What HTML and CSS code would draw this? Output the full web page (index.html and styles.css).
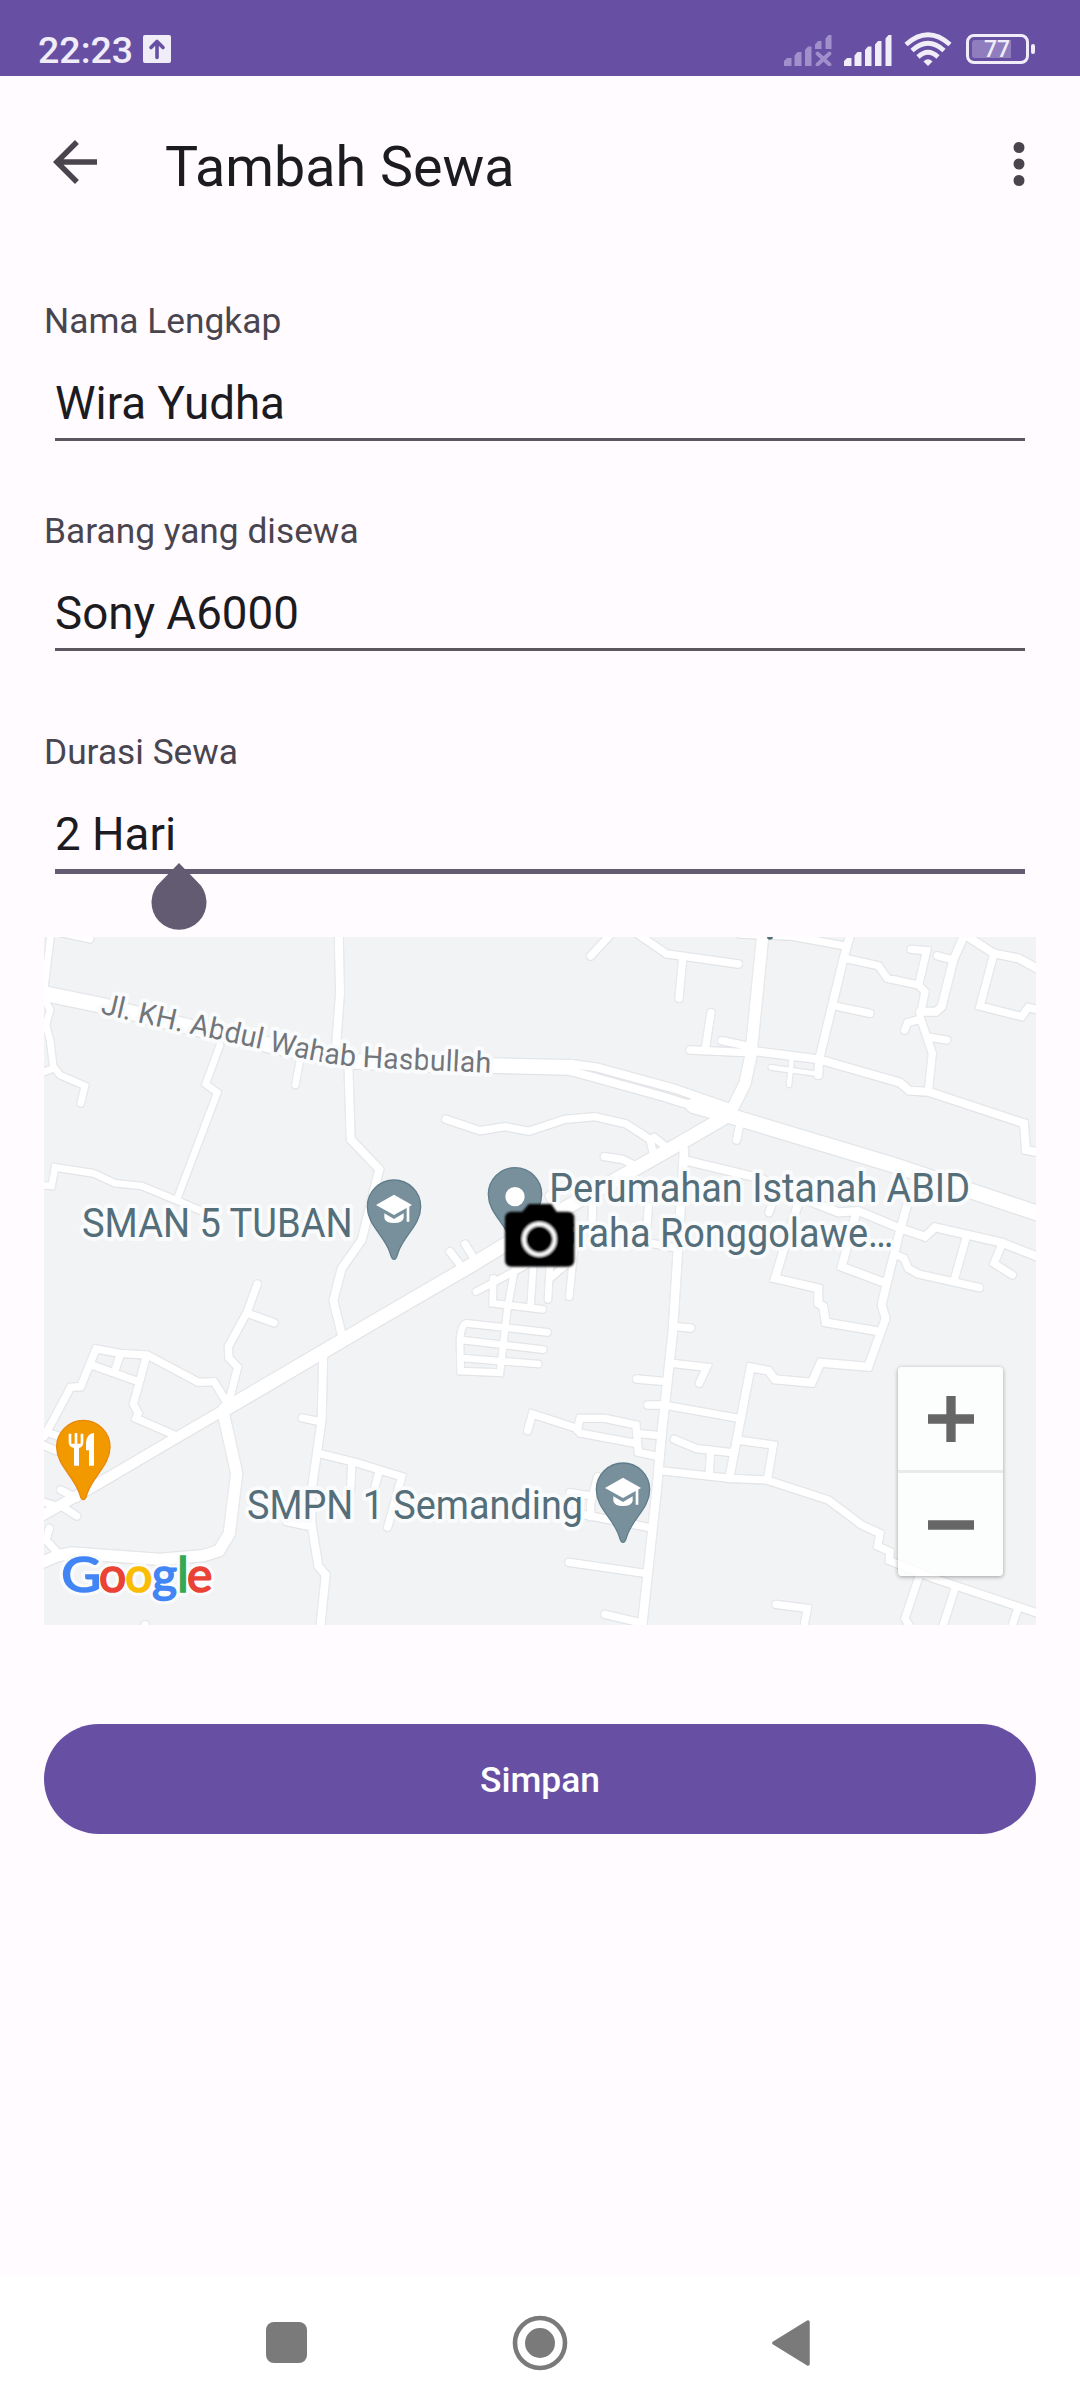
FILE: index.html
```html
<!DOCTYPE html>
<html lang="id">
<head>
<meta charset="utf-8">
<title>Tambah Sewa</title>
<link rel="stylesheet" href="styles.css">
</head>
<body>
<header class="status">
  <span class="time">22:23</span>
  <svg class="upload" width="28" height="28" viewBox="0 0 28 28"><rect width="28" height="28" rx="2" fill="#f0edf8"/><path d="M14 22.500V7M8 12.500l6-6 6 6" fill="none" stroke="#6750a4" stroke-width="3.600" stroke-linecap="round" stroke-linejoin="round"/></svg>
  <svg class="signal-off" width="48" height="31" viewBox="0 0 48 31"><g fill="#a08fca"><path d="M0 26l3-3h4.500v8H0zM10.500 20.500l3-3.500h4v14h-7zM21 15l3-3.500h3.500V31H21zM31 9.500l3-3.500h3.500v8H31zM41.500 3.500L44.500 0H47.500v14h-6z"/></g><path d="M33.500 18.500l12 11M45.500 18.500l-12 11" stroke="#a08fca" stroke-width="3.800" stroke-linecap="round"/></svg>
  <svg class="signal" width="48" height="31" viewBox="0 0 48 31"><path fill="#f0edf8" d="M0 26l3-3h4.500v8H0zM10.500 20.500l3-3.500h4v14h-7zM21 15l3-3.500h3.500V31H21zM31 9.500l3-3.500h3.500v25H31zM41.500 3.500L44.500 0H47.500v31h-6z"/></svg>
  <svg class="wifi" width="48" height="34" viewBox="0 0 48 34"><g fill="none" stroke="#f0edf8" stroke-width="4.600"><path d="M2 12.500Q24-7 46 12.500"/><path d="M8 18.500Q24 4 40 18.500"/><path d="M14 25Q24 15.500 34 25"/></g><path d="M19.500 29.500Q24 25 28.500 29.500L24 34z" fill="#f0edf8"/></svg>
  <div class="battery"><span class="level"></span><span class="percent">77</span></div>
</header>

<nav class="appbar">
  <svg class="back" width="66" height="66" viewBox="0 0 24 24"><path fill="#49454f" d="M20 11H7.830l5.590-5.590L12 4l-8 8 8 8 1.410-1.410L7.830 13H20v-2z"/></svg>
  <h1>Tambah Sewa</h1>
  <svg class="more" width="66" height="66" viewBox="0 0 24 24"><path fill="#49454f" d="M12 8a2 2 0 1 0 0-4 2 2 0 0 0 0 4zm0 2a2 2 0 1 0 0 4 2 2 0 0 0 0-4zm0 6a2 2 0 1 0 0 4 2 2 0 0 0 0-4z"/></svg>
</nav>

<main class="form">
  <div class="field"><div class="label">Nama Lengkap</div><div class="input">Wira Yudha</div></div>
  <div class="field"><div class="label">Barang yang disewa</div><div class="input">Sony A6000</div></div>
  <div class="field focused"><div class="label">Durasi Sewa</div><div class="input">2 Hari
    <svg class="handle" width="56" height="67" viewBox="0 0 56 67"><path fill="#625b71" d="M28 0L46 18.500A27.500 27.500 0 1 1 10 18.500z"/></svg></div></div>

  <div class="map">
    <svg class="tiles" width="992" height="688" viewBox="12 21 2976 2064">
      <defs>
        <g id="roads" fill="none" stroke-linecap="round">
          <!-- main roads -->
          <path class="r44" d="M0 188L180 225L480 298L700 348L900 392L1080 400L1360 407L1590 412"/>
          <path class="r24" d="M1590 401L1670 412L1900 475L2060 530M1590 423L1610 428L1870 500L2050 556"/>
          <path class="r44" d="M1960 527L2060 555L2560 705L3000 852"/>
          <path class="r40" d="M2050 565L1880 663L1580 832L1290 1008L1020 1165L900 1235L555 1438"/>
          <path class="r30" d="M555 1438L380 1540L180 1658L0 1760"/>
          <path class="r34" d="M2170 0L2132 380L2115 460L2068 555M550 1450L590 1630L568 1810L537 1862L490 1877L360 1888L95 1869L50 1878L0 1900"/>
          <path class="r26" d="M1932 660L1930 700L1910 1020L1898 1210L1865 1510L1850 1680L1805 2100"/>
          <!-- north west -->
          <path class="r20" d="M34 0L12 180M60 8L150 28M12 205L30 240L18 285L30 330L40 410L60 435L135 468L122 520M0 430L40 415M540 345L497 462L532 488L412 805M780 390L766 465M0 765L35 768L45 712L160 730L225 760L305 768L412 812L500 850"/>
          <path class="r24" d="M896 0L900 190L888 350M925 400L932 628L1018 718L965 930L905 1015L880 1112L908 1225"/>
          <!-- north centre -->
          <path class="r22" d="M1715 10L1652 78M1790 10L1880 72L1980 86L2095 102M1928 85L1917 205M2013 248L1995 362M1950 360L2120 368M1217 568L1320 602L1395 590L1467 604L1575 568L1665 560L1758 582L1830 628L1842 680M1842 622L1890 660M1693 680L1747 688L1795 712M1528 797L1545 830M1275 942L1305 990M1230 965L1265 1010M1658 820L1655 920M1825 830L1820 900M1780 930L1915 955"/>
          <!-- north east -->
          <path class="r22" d="M2100 12L2250 18L2415 48M2415 85L2515 107L2542 145L2635 165L2655 185L2640 260L2677 370L2665 485M2613 58L2660 62L2637 160M2385 228L2490 250M2692 77L2740 90M2640 268L2603 278L2594 300M2670 322L2720 330M2862 70L2820 228L2945 260L2965 232L2995 240M2045 332L2130 350M2100 580L2090 630M2200 810L2187 848"/>
          <path class="r24" d="M2432 10L2412 80L2337 390L2335 435M2775 10L2740 90L2705 230L2688 245L2640 245M2775 15L2860 70L2935 85L3000 120M2115 360L2337 388L2580 458L2608 482L2665 485L2952 580L2958 660L3000 668"/>
          <path class="r14" d="M2192 412L2335 432M2255 390L2247 465"/>
          <!-- east -->
          <path class="r24" d="M1930 690L2160 745L2300 810L2395 847L2455 843L2580 895L2655 920L2685 892L2885 938L3000 983M2275 820L2240 930L2205 1045L2335 1075L2335 1120L2350 1130L2357 1177L2520 1205M2448 850L2405 1010L2525 1055M2600 830L2575 920L2545 1040L2525 1125L2537 1165L2485 1310L2342 1298L2315 1358L2205 1348L2185 1322L2132 1312L2090 1530L2068 1645"/>
          <path class="r22" d="M2570 975L2592 985L2605 1015L2635 1032L2818 1073M2778 925L2742 1052M2885 945L2862 1000L2917 1035M2090 1530L2200 1545L2182 1650M1860 1622L2070 1645L2180 1650L2365 1710L2465 1785L2520 1810L2513 1848L2550 1865L2548 1892L2680 1945L3000 2052M2208 2023L2302 2035L2290 2100M2635 1945L2595 2065L2615 2100M2745 1975L2705 2100M2932 2040L2912 2100"/>
          <!-- housing blocks south of the marker -->
          <path class="r20" d="M1308 1085L1440 1015L1540 960M1360 1045L1358 1120L1508 1138M1425 1010L1402 1138L1380 1328L1262 1323L1260 1230Q1264 1180 1280 1180L1522 1207M1480 1000L1472 1125M1530 1000L1524 1108M1530 1045L1590 995M1602 960L1588 1100M1510 1259L1265 1230M1495 1302L1265 1284"/>
          <!-- south centre -->
          <path class="r22" d="M1905 1190L1952 1194M1898 1300L2000 1312L1978 1360M1790 1347L1880 1355M1823 1425L1870 1425L2040 1455L2095 1465M1463 1502L1477 1452L1610 1495L1620 1509L1790 1541M1612 1500L1620 1465L1695 1465L1788 1485L1795 1567L1855 1580M1790 1510L1860 1517M1903 1528L1970 1556L2075 1568M2012 1560L2008 1625M1673 1640L1652 1720L1652 1760M1590 1688L1655 1698M1600 1748L1825 1792M1587 1897L1815 1930M1695 2053L1800 2078"/>
          <!-- south west -->
          <path class="r22" d="M652 1062L622 1145L565 1250L567 1284L593 1312L565 1420M622 1150L702 1178M12 1520L45 1460L92 1372L122 1370L168 1257L240 1270L322 1275L475 1357L522 1355L565 1425M155 1305L295 1355M240 1275L225 1322M320 1275L300 1350L280 1422L295 1450L288 1465L410 1518M787 1464L840 1475M835 1570L950 1598L1085 1640L1043 1792M935 1600L932 1680M1018 1620L1000 1690M740 1775L812 1790M62 1680L110 1705M75 1735L110 1758M0 1713L60 1732M28 1795L18 1830L50 1865M0 1541L50 1563M30 1510L60 1520M315 2084L312 2100"/>
          <path class="r24" d="M850 1260L845 1470L812 1700L815 1785L835 1908L857 1935L840 2100"/>
        </g>
        <path id="street" d="M180 250L300 278L455 312L670 358L800 388L870 401L960 411L1080 417L1400 431"/>
        <path id="pin" d="M0 158C-8 158-8 150-12 138C-30 85-80 55-80 0A80 80 0 0 1 80 0C80 55 30 85 12 138C8 150 8 158 0 158Z"/>
        <g id="cap" fill="#fff"><path d="M0-36L54-5L0 25L-54-5Z"/><path d="M38-2H46V45H38ZM-29 20V34Q-26 49 0 49Q26 49 29 34V20L0 37Z"/></g>
        <g id="wordmark">
          <text class="blue" x="64" y="1985" textLength="120" lengthAdjust="spacingAndGlyphs">G</text>
          <text class="red" x="177" y="1985">o</text>
          <text class="yellow" x="256" y="1985">o</text>
          <text class="blue" x="336" y="1985">g</text>
          <text class="green" x="412" y="1985">l</text>
          <text class="red" x="441" y="1985">e</text>
        </g>
        <filter id="soft" x="-10%" y="-10%" width="120%" height="120%"><feGaussianBlur stdDeviation="2.500"/></filter>
      </defs>
      <rect x="0" y="0" width="3000" height="2100" fill="#f1f3f4"/>
      <use href="#roads" class="casing"/>
      <use href="#roads" class="surface"/>
      <circle cx="2190" cy="20" r="9" fill="#546e7a"/>

      <text class="street"><textPath href="#street" textLength="1190" lengthAdjust="spacingAndGlyphs">Jl. KH. Abdul Wahab Hasbullah</textPath></text>
      <g class="place">
        <text x="126" y="920" textLength="812" lengthAdjust="spacingAndGlyphs">SMAN 5 TUBAN</text>
        <text x="1528" y="816" textLength="1262" lengthAdjust="spacingAndGlyphs">Perumahan Istanah ABID</text>
        <text x="1532" y="950" textLength="1028" lengthAdjust="spacingAndGlyphs">Graha Ronggolawe…</text>
        <text x="621" y="1768" textLength="1008" lengthAdjust="spacingAndGlyphs">SMPN 1 Semanding</text>
      </g>
      <g class="school">
        <use href="#pin" x="1062" y="830"/><use href="#pin" x="1425" y="793"/><use href="#pin" x="1749" y="1679"/>
      </g>
      <use href="#cap" x="1062" y="830"/><use href="#cap" x="1749" y="1679"/>
      <circle cx="1425" cy="800" r="29" fill="#fff"/>
      <use href="#pin" x="130" y="1551" fill="#f29900" stroke="#e8880c" stroke-width="4"/>
      <path transform="translate(130 1551)" fill="#fff" d="M-44-40H-36V-10H-26V-42H-18V-10H-8V-40H0V-15Q0 0-13 3V56H-28V3Q-44 0-44-15ZM32-42V56H17V10H8V-12Q10-40 32-42Z"/>
      <g filter="url(#soft)">
        <path d="M1415 845H1447L1466 822H1534L1550 845H1583Q1603 845 1603 865V990Q1603 1010 1583 1010H1415Q1395 1010 1395 990V865Q1395 845 1415 845Z"/>
        <circle cx="1498" cy="928" r="46" fill="none" stroke="#fff" stroke-width="12"/>
      </g>
      <use href="#wordmark" class="brand halo"/>
      <use href="#wordmark" class="brand ink"/>
    </svg>
    <div class="zoom">
      <div class="zoom-in"><svg width="46" height="46" viewBox="0 0 46 46"><path d="M23 0V46M0 23H46" stroke="#666" stroke-width="9.300"/></svg></div>
      <div class="zoom-out"><svg width="46" height="46" viewBox="0 0 46 46"><path d="M0 23H46" stroke="#666" stroke-width="9.300"/></svg></div>
    </div>
  </div>

  <button class="save">Simpan</button>
</main>

<footer class="sysnav">
  <svg width="41" height="41" viewBox="0 0 41 41"><rect width="41" height="41" rx="8" fill="#7a7a7a"/></svg>
  <svg width="56" height="56" viewBox="0 0 56 56"><circle cx="28" cy="28" r="25" fill="none" stroke="#7a7a7a" stroke-width="4.600"/><circle cx="28" cy="28" r="15" fill="#7a7a7a"/></svg>
  <svg width="38" height="46" viewBox="0 0 38 46"><path d="M2 23L36 2V44Z" fill="#7a7a7a" stroke="#7a7a7a" stroke-width="3.500" stroke-linejoin="round"/></svg>
</footer>
</body>
</html>
```

FILE: styles.css
```css
* { box-sizing: border-box; }
html, body { margin: 0; }
body {
  width: 1080px;
  height: 2408px;
  display: flex;
  flex-direction: column;
  background: #fffbff;
  color: #1c1b1f;
  font-family: Roboto, "Liberation Sans", sans-serif;
  overflow: hidden;
}
svg { display: block; flex: none; }

.status {
  height: 76px;
  padding: 24px 45px 0 38px;
  display: flex;
  align-items: center;
  background: #6750a4;
  color: #f0edf8;
}
.time { width: 105px; font-size: 37.5px; line-height: 44px; font-weight: 500; }
.upload { margin-top: -2px; }
.signal-off { margin-left: auto; }
.signal { margin-left: 12px; }
.wifi { margin-left: 12px; margin-top: -2px; }
.battery {
  position: relative;
  width: 63px;
  height: 30px;
  margin-left: 14px;
  margin-top: -2px;
  margin-right: 6px;
  padding: 3px;
  border: 3px solid #f0edf8;
  border-radius: 8px;
  display: flex;
}
.battery::after {
  content: "";
  position: absolute;
  right: -9px;
  top: 7px;
  width: 4px;
  height: 10px;
  border-radius: 2px;
  background: #f0edf8;
}
.level { width: 39px; height: 18px; border-radius: 3px 0 0 3px; background: #8f7dbd; }
.percent { margin-left: -27px; font-size: 23px; line-height: 19px; font-weight: 500; }

.appbar { height: 176px; padding: 0 28px 0 42px; display: flex; align-items: center; }
.back { margin-top: -4px; }
.appbar h1 {
  flex: 1;
  margin: 6px 0 0 57px;
  font-size: 55.6px;
  line-height: 66px;
  font-weight: 400;
}

.form { flex: 1; padding: 48px 44px 0; display: flex; flex-direction: column; }
.field { margin-bottom: 69px; }
.field:nth-child(2) { margin-bottom: 80px; }
.field.focused { margin-bottom: 63px; }
.label { margin-bottom: 35px; font-size: 35.3px; line-height: 42px; color: #49454f; }
.input {
  position: relative;
  margin: 0 11px;
  padding-bottom: 7px;
  border-bottom: 3px solid #5b5761;
  font-size: 45.7px;
  line-height: 54px;
}
.focused .input { border-bottom: 5px solid #625b71; }
.handle { position: absolute; left: 96px; top: 55px; }

.map { position: relative; height: 688px; }
.r14 { stroke-width: 14px; }
.r20 { stroke-width: 20px; }
.r22 { stroke-width: 22px; }
.r24 { stroke-width: 24px; }
.r26 { stroke-width: 26px; }
.r30 { stroke-width: 30px; }
.r34 { stroke-width: 34px; }
.r40 { stroke-width: 40px; }
.r44 { stroke-width: 44px; }
.surface { stroke: #fff; }
.casing { stroke: #e4e6e9; filter: drop-shadow(0 2px 0 #e0e2e5) drop-shadow(0 -2px 0 #e4e6e9) drop-shadow(2px 0 0 #e4e6e9) drop-shadow(-2px 0 0 #e4e6e9); }
.street, .place text, .halo { paint-order: stroke; stroke: #fafbfc; stroke-width: 24px; stroke-linejoin: round; }
.street { font-size: 88px; fill: #72767b; }
.place { font-size: 120px; fill: #546e7a; }
.school { fill: #78909c; stroke: #607d8b; stroke-width: 4px; }
.brand { font-family: Lato, Roboto, sans-serif; font-size: 144px; font-weight: 400; }
.ink { stroke: currentColor; stroke-width: 5px; }
.blue { color: #4285f4; fill: #4285f4; }
.red { color: #ea4335; fill: #ea4335; }
.yellow { color: #fbbc04; fill: #fbbc04; }
.green { color: #34a853; fill: #34a853; }

.zoom {
  position: absolute;
  right: 33px;
  bottom: 49px;
  width: 105px;
  height: 209px;
  border-radius: 4px;
  background: rgba(255, 255, 255, .8);
  box-shadow: 0 1px 4px rgba(0, 0, 0, .35);
  display: flex;
  flex-direction: column;
}
.zoom > div { flex: 1; display: flex; align-items: center; justify-content: center; }
.zoom-in { border-bottom: 3px solid #e9ebeb; }

.save {
  height: 110px;
  margin: 99px 0 0;
  padding: 1px 0 0;
  border: 0;
  border-radius: 55px;
  background: #6750a4;
  color: #fff;
  font: 500 35.4px/42px Roboto, "Liberation Sans", sans-serif;
}

.sysnav {
  height: 131px;
  padding: 0 270px 0 266px;
  display: flex;
  align-items: center;
  justify-content: space-between;
  background: #fff;
}
.sysnav svg:nth-child(2) { margin-left: 16px; margin-right: 16px; }
```
